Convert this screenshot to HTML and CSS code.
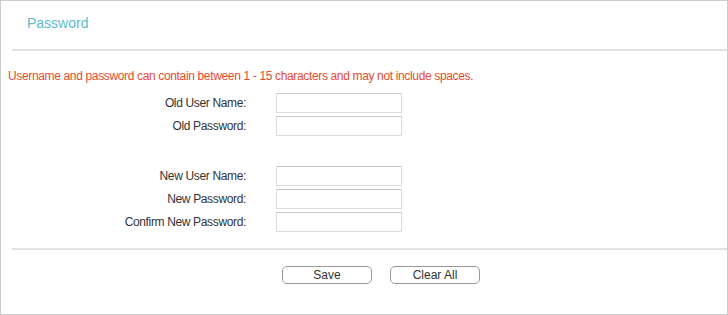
FILE: index.html
```html
<!DOCTYPE html>
<html>
<head>
<meta charset="utf-8">
<link rel="stylesheet" href="styles.css">
</head>
<body>
<div class="panel">
  <div class="header"><h1 class="title">Password</h1></div>
  <div class="divider"></div>
  <p class="note">Username and password can contain between 1 - 15 characters and may not include spaces.</p>
  <div class="form">
    <div class="group">
      <div class="row"><label class="label">Old User Name:</label><input class="field" type="text"></div>
      <div class="row"><label class="label">Old Password:</label><input class="field" type="password"></div>
    </div>
    <div class="group">
      <div class="row"><label class="label">New User Name:</label><input class="field" type="text"></div>
      <div class="row"><label class="label">New Password:</label><input class="field" type="password"></div>
      <div class="row"><label class="label">Confirm New Password:</label><input class="field" type="password"></div>
    </div>
  </div>
  <div class="divider bottom"></div>
  <div class="actions">
    <button class="btn" type="button">Save</button>
    <button class="btn" type="button">Clear All</button>
  </div>
</div>
</body>
</html>
```
FILE: styles.css
```css
* { box-sizing: border-box; }
html, body { margin: 0; padding: 0; background: #fff; }
body { font-family: "Liberation Sans", Arial, sans-serif; font-size: 12px; color: #333; letter-spacing: -0.35px; }
.panel {
  width: 728px;
  height: 315px;
  border: 1px solid #cccccc;
  display: flex;
  flex-direction: column;
}
.header { height: 48px; padding: 13px 0 0 26px; }
.title { margin: 0; font-weight: normal; font-size: 14px; line-height: 18px; color: #5bbccf; letter-spacing: 0; }
.divider { margin-left: 11px; height: 2px; background: #e2e2e2; }
.note { margin: 18px 0 0 7px; color: #e84a2f; line-height: 14px; font-size: 12px; }
.form { margin-top: 10px; display: flex; flex-direction: column; gap: 30px; }
.group { display: flex; flex-direction: column; gap: 3px; }
.row { display: flex; align-items: center; height: 20px; }
.label { width: 245px; text-align: right; color: #333; line-height: 14px; }
.field {
  margin: 0 0 0 30px;
  width: 126px;
  height: 20px;
  border: 1px solid #dcdcdc;
  border-top-color: #c8c8c8;
  border-radius: 1px;
  background: #fff;
  padding: 0 3px;
  font: inherit;
}
.bottom { margin-top: 16px; }
.actions { display: flex; justify-content: flex-start; gap: 18px; padding: 16px 0 0 281px; }
.btn {
  width: 90px;
  height: 18px;
  padding: 0;
  border: 1px solid #999;
  border-radius: 5px;
  background: #fff;
  font: inherit;
  font-size: 12px;
  color: #333;
  line-height: 16px;
}
```
